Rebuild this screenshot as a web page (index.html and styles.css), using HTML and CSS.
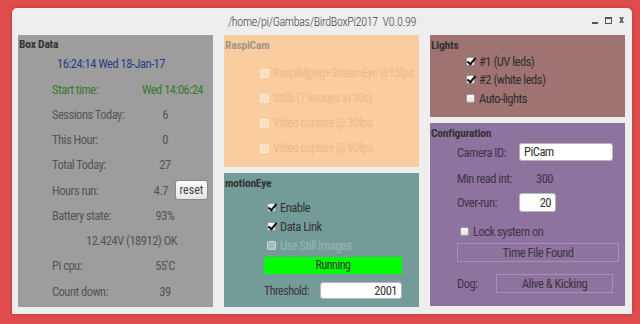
FILE: index.html
```html
<!DOCTYPE html>
<html lang="en">
<head>
  <meta charset="UTF-8" />
  <title>BirdBoxPi2017</title>
  <link rel="stylesheet" href="styles.css">
</head>
<body>

  <div class="window">

    <!-- TITLE BAR -->
    <div class="titlebar">
      <span class="title">/home/pi/Gambas/BirdBoxPi2017&nbsp; V0.0.99</span>
      <div class="controls">
        <span class="ctl-min"></span>
        <span class="ctl-max"></span>
        <span class="ctl-close">x</span>
      </div>
    </div>

    <div class="columns">

      <!-- BOX DATA -->
      <section class="panel box-data">
        <div class="panel-title">Box Data</div>
        <div class="clock">16:24:14 Wed 18-Jan-17</div>
        <div class="row start">
          <span class="label">Start time:</span>
          <span class="value-wide">Wed 14:06:24</span>
        </div>
        <div class="row"><span class="label">Sessions Today:</span><span class="value">6</span></div>
        <div class="row"><span class="label">This Hour:</span><span class="value">0</span></div>
        <div class="row"><span class="label">Total Today:</span><span class="value">27</span></div>
        <div class="row">
          <span class="label">Hours run:</span>
          <span class="value-short">4.7</span>
          <button class="btn-reset">reset</button>
        </div>
        <div class="row"><span class="label">Battery state:</span><span class="value">93%</span></div>
        <div class="row volts">12.424V (18912) OK</div>
        <div class="row"><span class="label">Pi cpu:</span><span class="value">55'C</span></div>
        <div class="row"><span class="label">Count down:</span><span class="value">39</span></div>
      </section>

      <div class="col">
        <!-- RASPICAM -->
        <section class="panel raspicam">
          <div class="panel-title">RaspiCam</div>
          <div class="list">
            <div class="check off disabled"><span class="box"></span>RaspiMjpeg+StreamEye @15fps</div>
            <div class="check off disabled"><span class="box"></span>Stills (7 images in 30s)</div>
            <div class="check off disabled"><span class="box"></span>Video capture @ 30fps</div>
            <div class="check off disabled"><span class="box"></span>Video capture @ 90fps</div>
          </div>
        </section>

        <!-- MOTIONEYE -->
        <section class="panel motioneye">
          <div class="panel-title">motionEye</div>
          <div class="list">
            <div class="check on"><span class="box"></span>Enable</div>
            <div class="check on"><span class="box"></span>Data Link</div>
            <div class="check off disabled"><span class="box"></span>Use Still Images</div>
          </div>
          <div class="status">Running</div>
          <div class="threshold">
            <span class="label">Threshold:</span>
            <span class="field right">2001</span>
          </div>
        </section>
      </div>

      <div class="col">
        <!-- LIGHTS -->
        <section class="panel lights">
          <div class="panel-title">Lights</div>
          <div class="list">
            <div class="check on"><span class="box"></span>#1 (UV leds)</div>
            <div class="check on"><span class="box"></span>#2 (white leds)</div>
            <div class="check off"><span class="box"></span>Auto-lights</div>
          </div>
        </section>

        <!-- CONFIGURATION -->
        <section class="panel config">
          <div class="panel-title">Configuration</div>
          <div class="cfg-row camera">
            <span class="label">Camera ID:</span>
            <span class="field">PiCam</span>
          </div>
          <div class="cfg-row minread">
            <span class="label">Min read int:</span>
            <span class="plain">300</span>
          </div>
          <div class="cfg-row overrun">
            <span class="label">Over-run:</span>
            <span class="field right small">20</span>
          </div>
          <div class="check off lock"><span class="box"></span>Lock system on</div>
          <div class="framed timefile">Time File Found</div>
          <div class="cfg-row dog">
            <span class="label">Dog:</span>
            <span class="framed">Alive &amp; Kicking</span>
          </div>
        </section>
      </div>

    </div>
  </div>

</body>
</html>
```

FILE: styles.css
```css
* {
  box-sizing: border-box;
  margin: 0;
  padding: 0;
}

body {
  width: 640px;
  height: 324px;
  overflow: hidden;
  background: #e04b4b;
  font-family: "Roboto Condensed", "DejaVu Sans Condensed", "Liberation Sans Narrow", Roboto, sans-serif;
  font-weight: 400;
  font-size: 12px;
  letter-spacing: -0.5px;
  white-space: nowrap;
  color: #3a3a3a;
}

/* --- WINDOW --- */
.window {
  margin: 8px 0 0 12px;
  width: 620px;
  height: 306px;
  background: #eeeeee;
  border-radius: 5px 5px 0 0;
  box-shadow: 0 0 3px rgba(0, 0, 0, 0.25);
  padding: 0 6px;
}

.titlebar {
  height: 27px;
  display: flex;
  justify-content: center;
  align-items: center;
  position: relative;
}

.title {
  font-size: 12px;
  font-weight: 300;
  letter-spacing: -0.3px;
  color: #444;
}

.controls {
  position: absolute;
  right: 2px;
  top: 7px;
  display: flex;
  align-items: center;
  gap: 7px;
}

.ctl-min {
  width: 6px;
  height: 2px;
  background: #555;
  margin-top: 6px;
}

.ctl-max {
  width: 7px;
  height: 7px;
  border: 1px solid #555;
  border-top-width: 2px;
}

.ctl-close {
  font-size: 11px;
  font-weight: 700;
  color: #555;
  line-height: 10px;
  letter-spacing: 0;
}

.columns {
  display: flex;
  gap: 11px;
  height: 272px;
}

.col {
  width: 195px;
  display: flex;
  flex-direction: column;
  gap: 6px;
}

.panel {
  width: 195px;
  padding-top: 3px;
}

.panel-title {
  font-weight: 700;
  font-size: 11.5px;
  letter-spacing: -0.2px;
  line-height: 14px;
  color: #333;
  padding-left: 1px;
}

/* --- BOX DATA --- */
.box-data {
  background: #9d9d9d;
  height: 272px;
  padding-top: 2px;
  color: #555;
}

.clock {
  height: 25.5px;
  line-height: 25.5px;
  padding-left: 39px;
  font-size: 12.5px;
  color: #2c3c82;
}

.box-data .row {
  height: 25.25px;
  display: flex;
  align-items: center;
  padding-left: 34px;
  font-size: 12.5px;
}

.box-data .label {
  width: 90px;
}

.box-data .value {
  width: 46px;
  text-align: center;
}

.box-data .start {
  color: #3b7a2c;
  padding-right: 10px;
}

.value-wide {
  margin-left: auto;
}

.value-short {
  width: 26px;
  text-align: right;
}

.btn-reset {
  margin-left: 7px;
  width: 33px;
  height: 20px;
  font: inherit;
  font-size: 12px;
  color: #444;
  background: linear-gradient(#fafafa, #e6e6e6);
  border: 1px solid #8a8a8a;
  border-radius: 3px;
}

.box-data .volts {
  padding-left: 68px;
}

/* --- CHECKBOXES --- */
.check {
  display: flex;
  align-items: center;
  gap: 4px;
}

.check .box {
  flex-shrink: 0;
  width: 9px;
  height: 9px;
  border: 1px solid #9a9a9a;
  border-radius: 2px;
  background: linear-gradient(#fdfdfd, #e2e2e2);
  position: relative;
}

.check.on .box::after {
  content: "";
  position: absolute;
  left: 2px;
  top: -2px;
  width: 3px;
  height: 7px;
  border: solid #111;
  border-width: 0 2px 2px 0;
  transform: rotate(40deg);
}

.check.disabled .box {
  border-color: rgba(255, 255, 255, 0.4);
  background: rgba(255, 255, 255, 0.35);
}

/* --- RASPICAM --- */
.raspicam {
  background: #f9cd9d;
  height: 132px;
}

.raspicam .panel-title {
  color: #a2968b;
}

.raspicam .list {
  margin-top: 8.5px;
  padding-left: 36px;
}

.raspicam .check {
  height: 25px;
  color: #e9bb91;
  font-size: 12.3px;
}

/* --- MOTIONEYE --- */
.motioneye {
  background: #739c98;
  height: 134px;
}

.motioneye .list {
  margin-top: 7.5px;
  padding-left: 43px;
}

.motioneye .check {
  height: 19px;
  font-size: 12.5px;
  color: #333;
}

.motioneye .check.disabled {
  color: #98b6b3;
}

.status {
  margin: 2.5px 0 0 40px;
  width: 138px;
  height: 17px;
  line-height: 17px;
  background: #00ff00;
  text-align: center;
  color: #333;
}

.threshold {
  display: flex;
  align-items: flex-end;
  margin: 8px 0 0 40px;
}

.threshold .label {
  width: 56px;
  line-height: 15px;
}

.field {
  display: block;
  width: 82px;
  height: 17px;
  line-height: 15px;
  padding: 0 4px;
  background: #fff;
  border: 1px solid #b8b8b8;
  border-radius: 3px;
  color: #333;
  font-size: 12.5px;
}

.field.right {
  text-align: right;
}

/* --- LIGHTS --- */
.lights {
  background: #9e7372;
  height: 82px;
}

.lights .list {
  padding-left: 36px;
}

.lights .check {
  height: 18.5px;
  font-size: 12.5px;
  color: #2e2e2e;
}

/* --- CONFIGURATION --- */
.config {
  background: #8e739e;
  height: 183px;
  color: #3e344a;
  font-size: 12.5px;
}

.cfg-row {
  display: flex;
  align-items: center;
  padding-left: 27px;
}

.cfg-row .label {
  width: 62px;
}

.camera {
  margin-top: 3px;
  height: 18px;
}

.camera .field {
  width: 94px;
  height: 18px;
  text-align: left;
}

.minread {
  margin-top: 8px;
  height: 18px;
}

.minread .plain {
  padding-left: 17px;
}

.overrun {
  margin-top: 6px;
  height: 19px;
}

.overrun .field {
  width: 37px;
  height: 19px;
  line-height: 17px;
}

.lock {
  margin-top: 10px;
  height: 18px;
  padding-left: 30px;
}

.framed {
  display: block;
  height: 19px;
  line-height: 17px;
  border: 1px solid #a890b6;
  text-align: center;
  color: #3b3344;
}

.timefile {
  margin: 3px 0 0 27px;
  width: 162px;
}

.dog {
  margin-top: 12px;
  height: 19px;
}

.dog .label {
  width: 39px;
}

.dog .framed {
  width: 117px;
}
```
